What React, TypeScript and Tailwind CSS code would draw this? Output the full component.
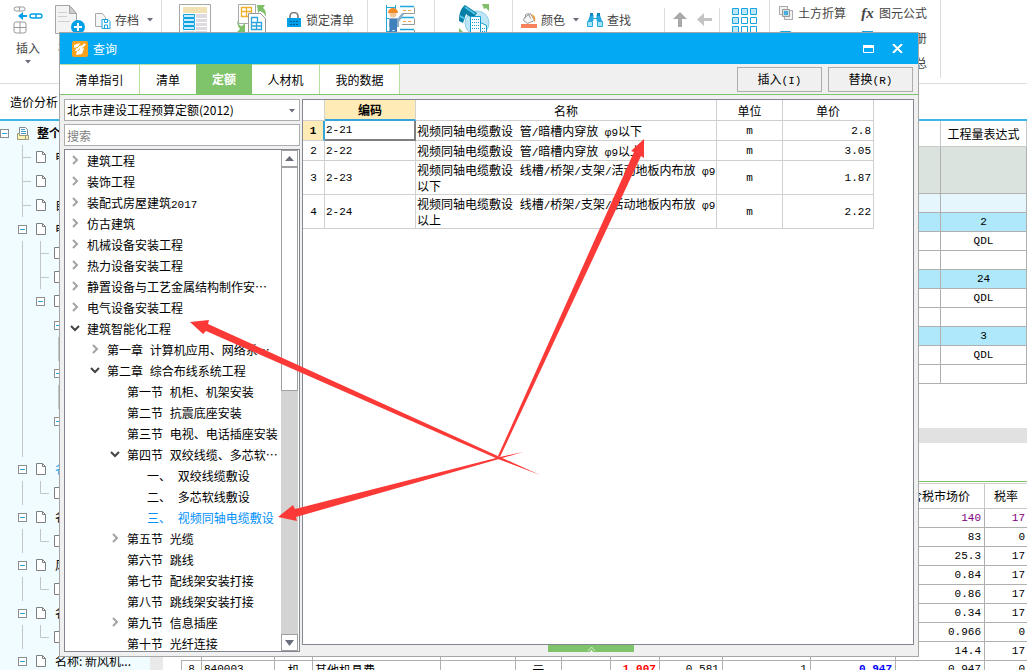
import React from 'react';

const treeItems = [
  { level: 0, text: '建筑工程', arrow: 'right' },
  { level: 0, text: '装饰工程', arrow: 'right' },
  { level: 0, text: '装配式房屋建筑2017', arrow: 'right' },
  { level: 0, text: '仿古建筑', arrow: 'right' },
  { level: 0, text: '机械设备安装工程', arrow: 'right' },
  { level: 0, text: '热力设备安装工程', arrow: 'right' },
  { level: 0, text: '静置设备与工艺金属结构制作安…', arrow: 'right' },
  { level: 0, text: '电气设备安装工程', arrow: 'right' },
  { level: 0, text: '建筑智能化工程', arrow: 'down' },
  { level: 1, text: '第一章 计算机应用、网络系…', arrow: 'right' },
  { level: 1, text: '第二章 综合布线系统工程', arrow: 'down' },
  { level: 2, text: '第一节 机柜、机架安装' },
  { level: 2, text: '第二节 抗震底座安装' },
  { level: 2, text: '第三节 电视、电话插座安装' },
  { level: 2, text: '第四节 双绞线缆、多芯软…', arrow: 'down' },
  { level: 3, text: '一、 双绞线缆敷设' },
  { level: 3, text: '二、 多芯软线敷设' },
  { level: 3, text: '三、 视频同轴电缆敷设', active: true },
  { level: 2, text: '第五节 光缆', arrow: 'right' },
  { level: 2, text: '第六节 跳线' },
  { level: 2, text: '第七节 配线架安装打接' },
  { level: 2, text: '第八节 跳线架安装打接' },
  { level: 2, text: '第九节 信息插座', arrow: 'right' },
  { level: 2, text: '第十节 光纤连接' },
];

const indents = ['pl-1', 'pl-6', 'pl-11', 'pl-16'];

const quotas = [
  { code: '2-21', name: '视频同轴电缆敷设 管/暗槽内穿放 φ9以下', unit: 'm', price: '2.8' },
  { code: '2-22', name: '视频同轴电缆敷设 管/暗槽内穿放 φ9以上', unit: 'm', price: '3.05' },
  { code: '2-23', name: '视频同轴电缆敷设 线槽/桥架/支架/活动地板内布放 φ9以下', unit: 'm', price: '1.87', tall: true },
  { code: '2-24', name: '视频同轴电缆敷设 线槽/桥架/支架/活动地板内布放 φ9以上', unit: 'm', price: '2.22', tall: true },
];

// guides: one letter per 18px column. v = line, b = branch, l = elbow, x = collapse box, d = document, p = project
const projectRows = [
  { guides: 'xp', text: '整个项目', cls: 'font-bold' },
  { guides: '_bd', text: '电气', cls: '' },
  { guides: '_bd', text: '', cls: '' },
  { guides: '_bd', text: '自控', cls: '' },
  { guides: '_xd', text: '电气', cls: '' },
  { guides: '_vbd', text: '', cls: '' },
  { guides: '_vbd', text: '', cls: '' },
  { guides: '_vxd', text: '', cls: '' },
  { guides: '_v_x', text: '', cls: '' },
  { guides: '_v_v', text: '', cls: '' },
  { guides: '_v_x', text: '', cls: '' },
  { guides: '_v_v', text: '', cls: '' },
  { guides: '_v_x', text: '', cls: '' },
  { guides: '_v', text: '', cls: '' },
  { guides: '_xd', text: '名称', cls: 'text-[#1aa9e8]' },
  { guides: '_vld', text: '', cls: '' },
  { guides: '_xd', text: '名称', cls: '' },
  { guides: '_vld', text: '', cls: '' },
  { guides: '_xd', text: '风机', cls: '' },
  { guides: '_vld', text: '', cls: '' },
  { guides: '_xd', text: '名称', cls: '' },
  { guides: '_vld', text: '', cls: '' },
  { guides: '_xd', text: '名称: 新风机...', cls: '' },
];

const exprRows = [
  { value: '', cls: 'h-[47px] bg-[#dae3dd]' },
  { value: '', cls: 'h-[19px] bg-[#e5f7fc]' },
  { value: '2', cls: 'h-[19px] bg-[#aee8fa]' },
  { value: 'QDL', cls: 'h-[19px]' },
  { value: '', cls: 'h-[19px]' },
  { value: '24', cls: 'h-[19px] bg-[#aee8fa]' },
  { value: 'QDL', cls: 'h-[19px]' },
  { value: '', cls: 'h-[19px]' },
  { value: '3', cls: 'h-[19px] bg-[#aee8fa]' },
  { value: 'QDL', cls: 'h-[19px]' },
  { value: '', cls: 'h-[19px]' },
];

const priceRows = [
  ['140', '17'],
  ['83', '0'],
  ['25.3', '17'],
  ['0.84', '17'],
  ['0.86', '17'],
  ['0.34', '17'],
  ['0.966', '0'],
  ['14.4', '17'],
];

const leadingColumns = ['no', 'code', 'type', 'name', 'spec', 'unit', 'loss', 'content', 'amount', 'budget', 'market'];

// Latin letters and digits use a narrow monospace so they take half a Chinese character
function Mixed({ text }: { text: string }) {
  return (
    <>
      {text.split(/([\x20-\x7eφ]+)/).map((part, i) =>
        i % 2 ? (
          <span key={i} className="font-['Liberation_Mono','Noto_Sans_CJK_SC',monospace] text-[11px] leading-none">{part}</span>
        ) : (
          part
        )
      )}
    </>
  );
}

// Cell value without any Chinese text
function Num({ text }: { text: string }) {
  return <span className="block font-['Liberation_Mono',monospace] text-[11px] leading-[14px]">{text}</span>;
}

function Caret() {
  return (
    <svg width="6" height="4" viewBox="0 0 6 4" className="shrink-0">
      <path d="M0 0h6L3 3.5z" fill="#6b6f7d" />
    </svg>
  );
}

function Chevron({ dir }: { dir?: string }) {
  return (
    <svg width="12" height="12" viewBox="0 0 12 12" fill="none" strokeWidth="2" className="shrink-0">
      {dir === 'right' && <path d="M4 1l4 4-4 4" stroke="#a3a3a3" />}
      {dir === 'down' && <path d="M2 3l4 4 4-4" stroke="#444" />}
    </svg>
  );
}

function Guide({ kind }: { kind: string }) {
  return (
    <svg width="18" height="24" viewBox="0 0 18 24" fill="none" className="shrink-0">
      {kind === 'v' && <path d="M9.5 0v24" stroke="#c3c6c8" />}
      {kind === 'b' && <path d="M9.5 0v24M9.5 12.5H18" stroke="#c3c6c8" />}
      {kind === 'l' && <path d="M9.5 0v12.5H18" stroke="#c3c6c8" />}
      {kind === 'x' && (
        <>
          <rect x="5.5" y="8.5" width="8" height="8" fill="#fff" stroke="#8b8f92" />
          <path d="M7 12.5h5" stroke="#2aa6d8" />
        </>
      )}
      {kind === 'd' && <path d="M5.5 6.5h6l3 3v8h-9zM11.5 6.5v3h3" fill="#fff" stroke="#7f7f7f" />}
      {kind === 'p' && (
        <>
          <path d="M6.5 14.5v-8h6l2 2v9h-8z" fill="#fff" stroke="#7c8a94" />
          <path d="M8 8.5h4M8 10.5h5M8 12.5h5" stroke="#3f9fc4" />
          <path d="M4.5 12.5h2v2h6v4h-8zM12.5 14.5h3v4h-3z" fill="#fdf3b4" stroke="#9a9a7a" />
        </>
      )}
    </svg>
  );
}

function Ribbon() {
  return (
    <header className="flex h-[84px] shrink-0 border-b border-[#dcdcdc] bg-white text-[12px] leading-4 text-[#444]">
      <div className="flex w-[162px] shrink-0 border-r border-[#dcdcdc] pt-[5px] pl-3">
        <button className="flex w-8 flex-col items-center">
          <svg width="30" height="30" viewBox="0 0 30 30" fill="none">
            <path d="M1 4a2 2 0 0 1 2-2h7a2 2 0 0 1 0 4H3a2 2 0 0 1-2-2zM6.5 2v4" stroke="#9a9a9a" />
            <path d="M17 11a2 2 0 0 1 2-2h8a2 2 0 0 1 0 4h-8a2 2 0 0 1-2-2zM23 9v4" stroke="#00a0e9" strokeWidth="1.4" />
            <path d="M5 11l5-4v3h4v2h-4v3z" fill="#00a0e9" />
            <path d="M3 17h8a2 2 0 0 1 2 2v7a2 2 0 0 1-2 2H3a2 2 0 0 1-2-2v-7a2 2 0 0 1 2-2zM1 22.5h12M7 17v11" stroke="#9a9a9a" />
          </svg>
          <span className="mt-[5px]">插入</span>
          <span className="mt-1"><Caret /></span>
        </button>
        <button className="ml-[10px] flex w-8 flex-col items-center">
          <svg width="32" height="30" viewBox="0 0 32 30" fill="none">
            <path d="M1.5.5h14l7 8v20h-21z" fill="#f3f3f3" stroke="#a6a6a6" />
            <path d="M15.5.5l7 8h-7z" fill="#ccc" stroke="#a6a6a6" />
            <path d="M4 7.5h9M4 11.5h9M4 16.5h12" stroke="#d0d0d0" />
            <circle cx="24" cy="22" r="7" fill="#00a0e9" />
            <path d="M24 18v8M20 22h8" stroke="#fff" strokeWidth="2" />
          </svg>
          <span className="mt-[5px]">补充</span>
        </button>
        <button className="ml-2 flex h-[30px] items-center gap-1">
          <svg width="17" height="17" viewBox="0 0 17 17" fill="none">
            <path d="M1.5 1.5h7l3 4v9h-10z" stroke="#aaa" fill="#f6f6f6" />
            <path d="M8 7.5h6l2 2v7H8z" fill="#fff" stroke="#18a4e0" />
            <path d="M10.5 8v2.5h3V8M10.5 16v-3h3v3" stroke="#18a4e0" />
          </svg>
          <span>存档</span>
          <span className="ml-1"><Caret /></span>
        </button>
      </div>

      <div className="flex w-[206px] shrink-0 border-r border-[#dcdcdc] pt-1 pl-[17px]">
        <button className="h-8 w-8">
          <svg width="32" height="32" viewBox="0 0 32 32" fill="none">
            <path d="M.5.5h31v31H.5z" stroke="#a6a6a6" fill="#fff" />
            <path d="M4 3h24v6H4z" fill="#f1e1b3" />
            <path d="M17 10h11v4H17zM17 15h11v3H17zM17 19h11v3H17zM17 23h11v3H17zM4 27h11v3H4zM17 27h11v3H17z" fill="#dedae0" />
            <path d="M4.5 10.5h11v3h-11zM4.5 14.5h11v3h-11zM4.5 18.5h11v3h-11zM4.5 22.5h11v3h-11z" fill="#c9ecfa" stroke="#12a2e0" />
          </svg>
        </button>
        <button className="ml-[26px] h-8 w-8">
          <svg width="30" height="32" viewBox="0 0 30 32" fill="none">
            <path d="M1.5.5h17v19h-17z" fill="#fff" stroke="#aaa" />
            <path d="M4.5 3.5h10v9h-10zM4 7.5h10M9.5 4v8" stroke="#f0b02c" strokeWidth="1.3" />
            <path d="M11.5 9.5h12l5 5v17h-17z" fill="#fff" stroke="#999" />
            <path d="M14.5 13.5h6v5h-6zM14.5 18.5h10v7h-10zM14 22h10M19.5 18v7" stroke="#2ba5dc" strokeWidth="1.3" />
            <path d="M20 1h8l-2 3c3 2 3 6 3 9-1-3-3-5-6-6l-2 2z" fill="#7fbf6a" />
            <path d="M0 16c1 4 3 6 5 6l3-3v9H0l3-3c-2-2-3-5-3-9z" fill="#7fbf6a" />
          </svg>
        </button>
        <button className="ml-[18px] flex h-8 items-center gap-1">
          <svg width="15" height="16" viewBox="0 0 15 16" fill="none">
            <path d="M3 6V4.5a4 4 0 0 1 8 0V6" stroke="#777" strokeWidth="1.6" />
            <path d="M0 6h14v9H0z" fill="#00a0e9" />
            <path d="M3 9.5h8M3 12.5h8" stroke="#075d8c" strokeDasharray="2 1" />
          </svg>
          <span>锁定清单</span>
        </button>
      </div>

      <div className="flex w-[67px] shrink-0 justify-center border-r border-[#dcdcdc] pt-1">
        <svg width="32" height="32" viewBox="0 0 32 32" fill="none">
          <path d="M1.5 1v31M10.5 1v6M1 3.5h10M1 14.5h10M1 27.5h10" stroke="#22a7dd" />
          <path d="M15 2.5h14M15 13.5h14M15 25.5h14" stroke="#22a7dd" strokeWidth="1.5" />
          <path d="M17 9.5h12.5v-6M17 20.5h12.5v-6M29.5 26v6" stroke="#999" />
          <path d="M18 6.5h10M18 17.5h10M18 28.5h10" stroke="#f0a43a" strokeDasharray="3 2" />
          <circle cx="8" cy="10" r="3.5" fill="#f3c59b" />
          <path d="M3 9a5 5 0 0 1 10 0z" fill="#f08a24" />
          <path d="M4 14h9l4-5 2 1-5 8v5H4z" fill="#8dadc9" />
          <path d="M5 15h7v17H9.5v-6h-2v6H4z" fill="#3f80bd" />
        </svg>
      </div>

      <div className="flex w-[78px] shrink-0 justify-center border-r border-[#dcdcdc] pt-1">
        <svg width="32" height="32" viewBox="0 0 32 32" fill="none">
          <circle cx="19" cy="19" r="12" fill="#bde7f6" stroke="#8ccfe6" />
          <path d="M7 1l12 8-4 6-7-5-3 9-4-2C1 9 3 4 7 1z" fill="#087fa6" />
          <path d="M7 3l10 7M2 12l5 3" stroke="#4ec4e4" strokeWidth="2" />
          <path d="M12.5 12.5h10v19h-10zM22.5 18.5l6 3v10h-6z" fill="#fff" stroke="#119fd2" />
          <path d="M14 15.5h7M14 18.5h7M14 21.5h7M14 24.5h7M24 24.5h3M24 27.5h3" stroke="#119fd2" strokeDasharray="1 1" />
          <path d="M24 0h7v7l-3-3-2 1zM1 24l6 6H1z" fill="#7fbf6a" />
        </svg>
      </div>

      <div className="flex w-[151px] shrink-0 items-start pt-1 pl-2">
        <button className="flex h-8 items-center gap-1">
          <svg width="16" height="16" viewBox="0 0 16 16" fill="none">
            <path d="M3.5 5.5l6-4 4 7-7 3-4-3z" fill="#f5f5f5" stroke="#999" />
            <path d="M4.5 6V2.5l3-1 2 5" stroke="#999" />
            <path d="M10 2c4 1 5 4 4 9-1-4-2-6-4-9z" fill="#eda13c" />
            <path d="M0 12h16v4H0z" fill="#f7825c" />
          </svg>
          <span>颜色</span>
          <span className="ml-1"><Caret /></span>
        </button>
        <button className="ml-2 flex h-8 items-center gap-1">
          <svg width="16" height="16" viewBox="0 0 16 16" fill="none">
            <path d="M3 3h3.5v3h3V3H13l2 6H9.5V7h-3v2H1z" fill="#28a8dc" />
            <path d="M3 1h3v3H3zM10 1h3v3h-3z" fill="#0b87c4" />
            <path d="M.5 9.5h5v5h-5zM10.5 9.5h5v5h-5z" fill="#a4e4f6" stroke="#28a8dc" />
          </svg>
          <span>查找</span>
        </button>
      </div>

      <div className="mt-2 flex w-14 shrink-0 gap-[10px] border-x border-[#dcdcdc] pt-1 pl-2">
        <svg width="14" height="15" viewBox="0 0 14 15"><path d="M7 0l7 7H9v8H5V7H0z" fill="#a9a9a9" /></svg>
        <svg width="15" height="15" viewBox="0 0 15 15"><path d="M0 7.5L7 1v5h8v3H7v5z" fill="#c4c4c4" /></svg>
      </div>

      <div className="flex w-[50px] shrink-0 justify-center border-r border-[#dcdcdc] pt-2">
        <svg width="26" height="26" viewBox="0 0 26 26" stroke="#17a5df" fill="#fff">
          <path d="M.5.5h6v6h-6zM9.5.5h6v6h-6zM18.5.5h6v6h-6zM.5 9.5h6v6h-6zM.5 18.5h6v6h-6z" fill="#bfe6f7" />
          <path d="M9.5 9.5h6v6h-6zM18.5 9.5h6v6h-6zM9.5 18.5h6v6h-6zM18.5 18.5h6v6h-6z" />
        </svg>
      </div>

      <div className="mb-[5px] grid w-[171px] shrink-0 grid-cols-[82px_1fr] content-start gap-y-[9px] border-r border-[#dcdcdc] pt-[5px] pl-[9px]">
        <button className="flex items-center gap-[5px]">
          <svg width="14" height="14" viewBox="0 0 14 14">
            <path d="M.5.5h8v8h-8zM5.5 4.5h8v9h-8z" fill="#f1f1f1" stroke="#aaa" />
            <path d="M3.5 3.5h7v7h-7z" fill="#cdd" stroke="#999" />
            <path d="M5 5h4v4H5z" fill="#45aee0" />
          </svg>
          <span>土方折算</span>
        </button>
        <button className="flex items-center gap-[5px]">
          <span className="w-[13px] font-['Liberation_Serif',serif] text-[15px] font-bold italic">fx</span>
          <span>图元公式</span>
        </button>
        <button className="flex items-center gap-[5px]">
          <svg width="14" height="14" viewBox="0 0 14 14"><path d="M1.5.5h10v12h-10z" fill="#fff" stroke="#17a5df" /></svg>
          <span>设置</span>
        </button>
        <button className="flex items-center gap-[5px]">
          <svg width="13" height="14" viewBox="0 0 13 14"><path d="M1 0h11v13H1z" fill="#17a5df" /></svg>
          <span>五金手册</span>
        </button>
        <span />
        <button className="flex items-center gap-[5px]">
          <svg width="13" height="14" viewBox="0 0 13 14"><path d="M1 0h11v13H1z" fill="#17a5df" /></svg>
          <span>工程汇总</span>
        </button>
      </div>
    </header>
  );
}

function ProjectTree() {
  return (
    <nav className="w-[150px] shrink-0 overflow-hidden bg-[#f0fcff] text-[12px] text-black">
      <ul className="-ml-[5px]">
        {projectRows.map((row, i) => (
          <li key={i} className="flex h-6 items-center whitespace-nowrap">
            {row.guides.split('').map((g, j) => (
              <Guide key={j} kind={g} />
            ))}
            <span className={`ml-1.5 ${row.cls}`}>{row.text}</span>
          </li>
        ))}
      </ul>
    </nav>
  );
}

function Workspace() {
  return (
    <section className="flex min-w-0 flex-1 flex-col overflow-hidden bg-white">
      <table className="w-full shrink-0 table-fixed border-separate border-spacing-0 text-center text-[12px] leading-4">
        <colgroup>
          <col />
          <col className="w-[88px]" />
          <col className="w-[86px]" />
        </colgroup>
        <thead>
          <tr className="h-[26px]">
            <th className="border-b border-[#c8c8c8]" />
            <th className="border-r border-b border-[#c8c8c8]" />
            <th className="border-r border-b border-[#c8c8c8] p-0 font-normal">工程量表达式</th>
          </tr>
        </thead>
        <tbody>
          {exprRows.map((row, i) => (
            <tr key={i} className={row.cls}>
              <td className="border-b border-[#b0b0b0] p-0" />
              <td className="border-r border-b border-[#b0b0b0] p-0" />
              <td className="border-r border-b border-[#b0b0b0] p-0"><Num text={row.value} /></td>
            </tr>
          ))}
        </tbody>
      </table>

      <div className="mt-[44px] h-[15px] shrink-0 bg-[#e1e1e1]" />

      <div className="mt-[38px] shrink-0 border-t border-[#7fc36a] pt-px pl-[18px]">
        <table className="w-full table-fixed border-separate border-spacing-0 border-t border-[#d0d0d0] text-right text-[12px] leading-4">
          <colgroup>
            <col className="w-[21px]" />
            <col className="w-[73px]" />
            <col className="w-[38px]" />
            <col />
            <col className="w-[75px]" />
            <col className="w-[46px]" />
            <col className="w-[49px]" />
            <col className="w-[49px]" />
            <col className="w-[63px]" />
            <col className="w-[88px]" />
            <col className="w-[85px]" />
            <col className="w-[89px]" />
            <col className="w-[42px]" />
          </colgroup>
          <thead>
            <tr className="h-[25px]">
              <th colSpan={11} className="border-r border-b border-[#c8c8c8] p-0" />
              <th className="border-r border-b border-[#c8c8c8] p-0 text-center font-normal">含税市场价</th>
              <th className="border-b border-[#c8c8c8] p-0 text-center font-normal">税率</th>
            </tr>
          </thead>
          <tbody>
            {priceRows.map(([price, rate], i) => (
              <tr key={i} className={i === 0 ? 'h-[19px] text-[#800080]' : 'h-[19px]'}>
                {leadingColumns.map((name) => (
                  <td key={name} className="border-r border-b border-[#b0b0b0] p-0" />
                ))}
                <td className="border-r border-b border-[#b0b0b0] p-0 pr-[3px]"><Num text={price} /></td>
                <td className="border-b border-[#b0b0b0] p-0 pr-[2px]"><Num text={rate} /></td>
              </tr>
            ))}
            <tr className="h-[19px] align-top">
              <td className="border-r border-l border-[#b0b0b0] p-0 pt-px text-center"><Num text="8" /></td>
              <td className="border-r border-[#b0b0b0] p-0 pt-px pl-[2px] text-left"><Num text="840003" /></td>
              <td className="border-r border-[#b0b0b0] p-0 pt-px text-center">机</td>
              <td className="border-r border-[#b0b0b0] p-0 pt-px pl-[2px] text-left">其他机具费</td>
              <td className="border-r border-[#b0b0b0] p-0 pt-px" />
              <td className="border-r border-[#b0b0b0] p-0 pt-px text-center">元</td>
              <td className="border-r border-[#b0b0b0] p-0 pt-px" />
              <td className="border-r border-[#b0b0b0] p-0 pt-px pr-[3px] font-bold text-[#f00]"><Num text="1.007" /></td>
              <td className="border-r border-[#b0b0b0] p-0 pt-px pr-[3px]"><Num text="0.581" /></td>
              <td className="border-r border-[#b0b0b0] p-0 pt-px pr-[3px]"><Num text="1" /></td>
              <td className="border-r border-[#b0b0b0] p-0 pt-px pr-[3px] font-bold text-[#00f]"><Num text="0.947" /></td>
              <td className="border-r border-[#b0b0b0] p-0 pt-px pr-[3px]"><Num text="0.947" /></td>
              <td className="p-0 pt-px pr-[2px]"><Num text="0" /></td>
            </tr>
          </tbody>
        </table>
      </div>
    </section>
  );
}

function QuotaTree() {
  return (
    <div className="flex min-h-0 flex-1 border border-[#828790] bg-white pr-px">
      <ul className="min-w-0 flex-1 overflow-hidden">
        {treeItems.map((item) => (
          <li
            key={item.text}
            className={`flex h-[21px] items-center gap-1.5 whitespace-nowrap ${indents[item.level]} ${item.active ? 'text-[#0090f8]' : ''}`}
          >
            <Chevron dir={item.arrow} />
            <span><Mixed text={item.text} /></span>
          </li>
        ))}
      </ul>
      <div className="flex w-[17px] shrink-0 flex-col bg-[#d3d3d3]">
        <button aria-label="向上滚动" className="flex h-[17px] shrink-0 items-center justify-center border border-[#a0a0a0] bg-white">
          <svg width="9" height="5" viewBox="0 0 9 5"><path d="M0 5L4.5 0 9 5z" fill="#6b6f7d" /></svg>
        </button>
        <div className="h-[224px] border border-[#a0a0a0] bg-white" />
        <div className="flex-1" />
        <button aria-label="向下滚动" className="flex h-[17px] shrink-0 items-center justify-center border border-[#a0a0a0] bg-white">
          <svg width="9" height="6" viewBox="0 0 9 6"><path d="M0 0h9L4.5 6z" fill="#6b6f7d" /></svg>
        </button>
      </div>
    </div>
  );
}

function QuotaTable() {
  return (
    <table className="w-[571px] table-fixed border-separate border-spacing-0 text-[12px] leading-[15px]">
      <colgroup>
        <col className="w-[22px]" />
        <col className="w-[91px]" />
        <col className="w-[301px]" />
        <col className="w-[66px]" />
        <col className="w-[91px]" />
      </colgroup>
      <thead>
        <tr className="h-[21px]">
          <th className="border-r border-b border-[#d0d0d0] p-0" />
          <th className="border-r border-b-2 border-r-[#d0d0d0] border-b-[#36a4d8] bg-[#ffebb5] p-0 font-bold">编码</th>
          <th className="border-r border-b border-[#d0d0d0] p-0 font-normal">名称</th>
          <th className="border-r border-b border-[#d0d0d0] p-0 font-normal">单位</th>
          <th className="border-r border-b border-[#d0d0d0] p-0 font-normal">单价</th>
        </tr>
      </thead>
      <tbody>
        {quotas.map((q, i) => (
          <tr key={q.code} className={q.tall ? 'h-[34px]' : 'h-5'}>
            <td className={`border-b p-0 text-center ${i === 0 ? 'border-r-2 border-r-[#36a4d8] border-b-[#d0d0d0] bg-[#ffebb5] font-bold' : 'border-r border-[#d0d0d0]'}`}>
              <Num text={String(i + 1)} />
            </td>
            <td className={`p-0 pl-px ${i === 0 ? 'border-r-2 border-b-2 border-[#7f7f7f]' : 'border-r border-b border-[#d0d0d0]'}`}>
              <Num text={q.code} />
            </td>
            <td className="border-r border-b border-[#d0d0d0] p-0 pl-px"><Mixed text={q.name} /></td>
            <td className="border-r border-b border-[#d0d0d0] p-0 text-center"><Num text={q.unit} /></td>
            <td className="border-r border-b border-[#d0d0d0] p-0 pr-[2px] text-right"><Num text={q.price} /></td>
          </tr>
        ))}
      </tbody>
    </table>
  );
}

function QueryDialog() {
  return (
    <div role="dialog" aria-label="查询" className="absolute top-8 right-[108px] bottom-[13px] left-[59px] flex flex-col border border-[#a6a6a6] bg-[#f0f0f0] text-[12px] leading-4 text-black">
      {/* Title bar */}
      <div className="flex h-[31px] shrink-0 items-center bg-[#03a9f3] pr-[15px] pl-3 text-white">
        <svg width="16" height="16" viewBox="0 0 16 16" fill="none">
          <rect width="16" height="16" rx="2" fill="#f8a11e" />
          <path d="M2 4l6-2-1 3 3-1-3 4 5-1-2 6-6 1 1-4H3l2-4-3 1z" fill="#fff" />
          <path d="M6 10l4-5 4-2M5 7l3-3" stroke="#f8a11e" />
          <path d="M8 8l5-5" stroke="#fff" strokeWidth="2" />
        </svg>
        <span className="ml-[5px] flex-1">查询</span>
        <button aria-label="最大化" className="mr-[18px]">
          <svg width="11" height="8" viewBox="0 0 11 8" fill="none"><path d="M.5.5h10v7H.5z" stroke="#fff" /><path d="M0 0h11v3H0z" fill="#fff" /></svg>
        </button>
        <button aria-label="关闭">
          <svg width="11" height="9" viewBox="0 0 11 9" fill="none"><path d="M1 0l9 9M10 0L1 9" stroke="#fff" strokeWidth="2" /></svg>
        </button>
      </div>

      {/* Tabs */}
      <div className="flex h-[31px] shrink-0 border-b border-[#7fc36a]">
        <button className="w-20 border-t border-r border-[#b5e09d] bg-white">清单指引</button>
        <button className="w-14 border-t border-[#b5e09d] bg-white">清单</button>
        <button className="w-14 bg-[#7fc36a] font-bold text-white">定额</button>
        <button className="w-[68px] border-t border-r border-[#b5e09d] bg-white">人材机</button>
        <button className="w-20 border-t border-r border-[#b5e09d] bg-white">我的数据</button>
        <div className="flex flex-1 items-center justify-end gap-[6px] pr-[5px]">
          <button className="h-[25px] w-[85px] border border-[#adadad]"><Mixed text="插入(I)" /></button>
          <button className="h-[25px] w-[85px] border border-[#adadad]"><Mixed text="替换(R)" /></button>
        </div>
      </div>

      <div className="flex min-h-0 flex-1 gap-[2px] px-1 py-1">
        <div className="flex w-[236px] shrink-0 flex-col gap-[3px]">
          <div className="relative flex shrink-0">
            <select aria-label="定额库" className="h-[22px] w-full appearance-none border border-[#adadad] bg-white pl-[2px]">
              <option>北京市建设工程预算定额(2012)</option>
            </select>
            <span className="pointer-events-none absolute top-[10px] right-[5px] flex"><Caret /></span>
          </div>
          <input
            aria-label="搜索"
            placeholder="搜索"
            className="h-[22px] w-full shrink-0 border border-[#adadad] bg-white pl-[2px] placeholder:text-[#808080]"
          />
          <QuotaTree />
        </div>
        <div className="flex min-w-0 flex-1 flex-col">
          <div className="min-h-0 flex-1 overflow-hidden border border-[#828790] bg-white">
            <QuotaTable />
          </div>
          <button aria-label="展开" className="ml-[246px] flex h-[7px] w-[86px] shrink-0 items-end justify-center bg-[#7fc36a]">
            <svg width="9" height="6" viewBox="0 0 9 6" fill="none"><path d="M1 5l3.5-4L8 5" stroke="#d9f0d0" /><path d="M3 6l1.5-2L6 6z" fill="#fff" /></svg>
          </button>
        </div>
      </div>
    </div>
  );
}

export default function App() {
  return (
    <div className="relative flex h-screen flex-col overflow-hidden bg-white font-['Noto_Sans_CJK_SC',sans-serif]">
      <Ribbon />
      <div className="flex h-[37px] shrink-0 items-center border-b-2 border-[#41b4e6] pl-[10px] text-[12px] text-black">
        <button>造价分析</button>
      </div>
      <main className="flex min-h-0 flex-1">
        <ProjectTree />
        <div className="w-[13px] shrink-0 bg-[#e9e9e9]" />
        <Workspace />
      </main>
      <QueryDialog />

      {/* Hand-drawn arrows over the dialog */}
      <svg width="660" height="490" viewBox="0 0 660 490" fill="#fb3a37" className="pointer-events-none absolute top-0 left-0 overflow-visible">
        <path d="M190 322l19-2-1 4 292 133 40 18-42-16-292-128-3 3z" />
        <path d="M278 517l15-12 2 4 205-52 23-5-24 7-203 58 1 4z" />
        <path d="M644 139l-13 12 3 1-136 304 2 1 141-301 3 2z" />
      </svg>
    </div>
  );
}
